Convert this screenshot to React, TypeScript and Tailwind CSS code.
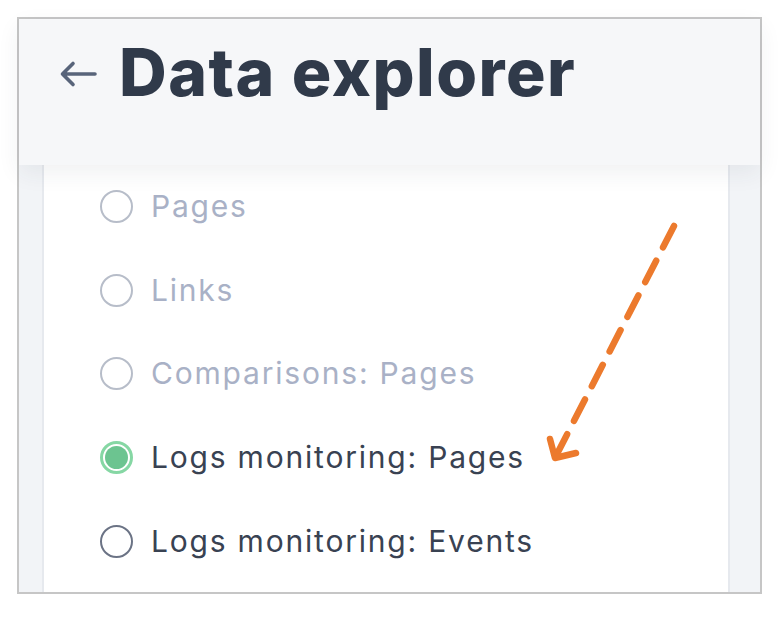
import React from "react";

type Item = { label: string; state: "disabled" | "checked" | "idle" };

const ITEMS: Item[] = [
  { label: "Pages", state: "disabled" },
  { label: "Links", state: "disabled" },
  { label: "Comparisons: Pages", state: "disabled" },
  { label: "Logs monitoring: Pages", state: "checked" },
  { label: "Logs monitoring: Events", state: "idle" },
];

function Radio({ state }: { state: Item["state"] }) {
  if (state === "checked") {
    return (
      <span className="flex h-[33px] w-[33px] shrink-0 items-center justify-center rounded-full border-[3px] border-[#86d7a4] bg-white">
        <span className="h-[23px] w-[23px] rounded-full bg-[#6cc490]" />
      </span>
    );
  }
  return (
    <span
      className={
        state === "disabled"
          ? "h-[33px] w-[33px] shrink-0 rounded-full border-[2.5px] border-[#b7bdc9] bg-white"
          : "h-[33px] w-[33px] shrink-0 rounded-full border-[2.5px] border-[#6b7385] bg-white"
      }
    />
  );
}

export default function App() {
  return (
    <div className="relative h-[618px] w-[782px] bg-white pl-[17px] pt-[17px] font-['Inter',sans-serif]">
      <div className="flex h-[577px] w-[745px] flex-col border-2 border-[#c6c6c6]">
        <header className="relative z-10 flex h-[146px] shrink-0 items-center bg-[#f6f7f9] pb-[40px] pl-[40px] shadow-[0_8px_22px_rgba(40,50,70,0.07)]">
          <svg width="38" height="28" viewBox="0 0 38 28" className="mr-[22px] mt-[4px]">
            <path
              d="M36 14H4M14 3.5L3.5 14L14 24.5"
              fill="none"
              stroke="#58647a"
              strokeWidth="3.6"
              strokeLinecap="round"
              strokeLinejoin="round"
            />
          </svg>
          <h1 className="text-[66px] font-extrabold leading-none tracking-[1.5px] text-[#303a4a]">
            Data explorer
          </h1>
        </header>

        <div className="flex flex-1">
          <div className="w-[25px] border-r-2 border-[#e6e9ee] bg-[#f2f4f7]" />
          <div className="flex flex-1 flex-col bg-white pl-[56px]">
            {ITEMS.map((item) => (
              <div key={item.label} className="flex h-[83.6px] items-center gap-[18px]">
                <Radio state={item.state} />
                <span
                  className={
                    item.state === "disabled"
                      ? "text-[30px] tracking-[1.8px] text-[#a9b1c6]"
                      : "text-[30px] tracking-[1.8px] text-[#394252]"
                  }
                >
                  {item.label}
                </span>
              </div>
            ))}
          </div>
          <div className="w-[32px] border-l-2 border-[#e6e9ee] bg-[#f2f4f7]" />
        </div>
      </div>

      <svg
        width="782"
        height="618"
        viewBox="0 0 782 618"
        className="pointer-events-none absolute left-0 top-0 z-20"
      >
        <path
          d="M674 226L557 454"
          fill="none"
          stroke="#ec7a2d"
          strokeWidth="6.5"
          strokeLinecap="round"
          strokeDasharray="24 15"
        />
        <path
          d="M550 439L555 458L576 453"
          fill="none"
          stroke="#ec7a2d"
          strokeWidth="6.5"
          strokeLinecap="round"
          strokeLinejoin="round"
        />
      </svg>
    </div>
  );
}
